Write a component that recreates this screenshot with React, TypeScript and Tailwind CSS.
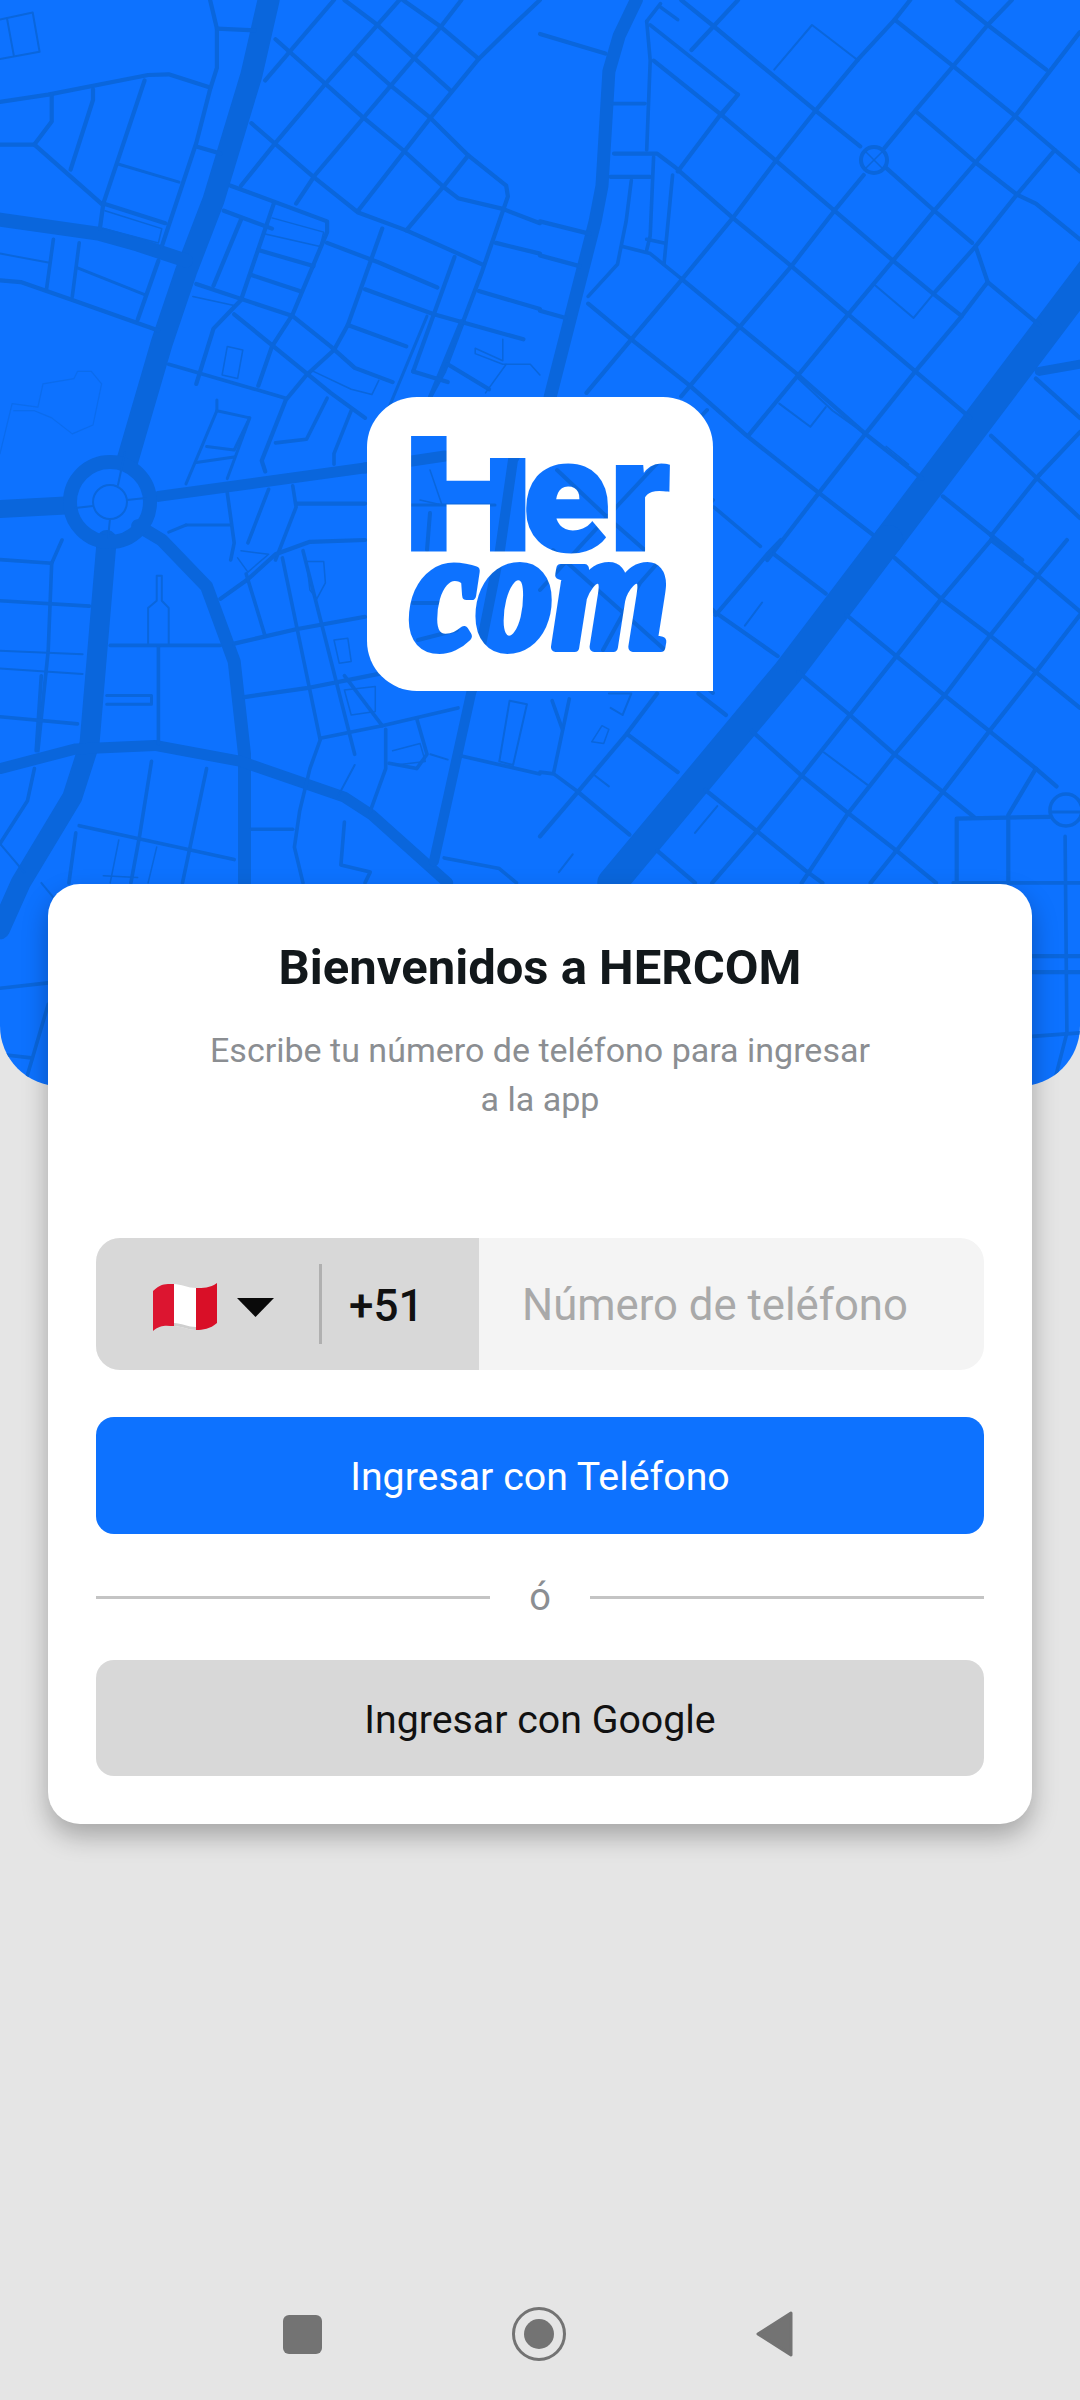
import * as React from "react";

type Road = { w: number; o?: number; p: number[] };

// street lines, traced per zone in the coordinates of a 2.904 x 2.8 enlargement
const zoneA: Road[] = [
  { w: 22, p: [780, 0, 730, 210, 620, 560, 540, 760, 470, 960, 370, 1290] },
  { w: 14, p: [0, 615, 290, 655, 400, 685, 540, 730] },
  { w: 11, p: [460, 1390, 1060, 1310] },
  { w: 18, p: [0, 1425, 190, 1415] },
  { w: 3.5, p: [0, 285, 140, 265, 430, 210, 490, 208, 610, 245] },
  { w: 3.5, p: [610, 0, 630, 80, 630, 190, 610, 250, 570, 400, 470, 690] },
  { w: 3.5, p: [630, 80, 740, 85] },
  { w: 3.5, p: [150, 265, 150, 340, 100, 405, 0, 405] },
  { w: 3.5, p: [100, 405, 300, 575] },
  { w: 3.5, p: [270, 250, 270, 280, 205, 475] },
  { w: 3.5, p: [420, 225, 300, 570, 290, 640] },
  { w: 3.5, p: [300, 570, 480, 625] },
  { w: 2.5, p: [345, 460, 520, 510] },
  { w: 3.5, p: [570, 410, 640, 430] },
  { w: 3.5, p: [800, 110, 1050, 325, 1170, 420, 1290, 525, 1330, 555, 1460, 585, 1568, 625] },
  { w: 3.5, p: [1000, 0, 1090, 65, 1200, 160, 1310, 255] },
  { w: 3.5, p: [1170, 0, 1280, 75, 1390, 165] },
  { w: 3.5, p: [1030, 150, 1135, 240, 1250, 330, 1360, 435, 1470, 520, 1475, 550, 1400, 760, 1290, 1040, 1250, 1110] },
  { w: 3.5, p: [730, 345, 910, 495, 1040, 595, 1180, 645, 1400, 740] },
  { w: 3.5, p: [770, 225, 970, 0] },
  { w: 3.5, p: [1160, 0, 945, 235, 800, 400, 700, 520] },
  { w: 3.5, p: [1340, 0, 1280, 75, 1135, 240, 915, 490, 860, 570] },
  { w: 3.5, p: [1568, 0, 1480, 80, 1390, 165, 1250, 330, 1040, 590] },
  { w: 3.5, p: [1360, 435, 1290, 520, 1180, 645] },
  { w: 3.5, p: [670, 520, 950, 620, 950, 650, 850, 880, 790, 970, 750, 1080] },
  { w: 3.5, p: [795, 570, 700, 840, 620, 920, 570, 1075] },
  { w: 3.5, p: [700, 615, 620, 800] },
  { w: 3.5, p: [650, 590, 790, 640] },
  { w: 3.5, p: [950, 680, 1100, 735, 1270, 805] },
  { w: 3.5, p: [1110, 640, 1040, 830, 1010, 910, 970, 980, 890, 1050, 830, 1120, 760, 1290, 770, 1320] },
  { w: 3.5, p: [750, 700, 910, 745] },
  { w: 3.5, p: [730, 770, 870, 815] },
  { w: 3.5, p: [570, 795, 850, 885, 960, 970, 1030, 1030, 1140, 1070] },
  { w: 3.5, p: [680, 880, 960, 1100, 1060, 1170] },
  { w: 3.5, p: [1060, 810, 1260, 880, 1520, 950] },
  { w: 3.5, p: [1010, 910, 1180, 970] },
  { w: 2.5, p: [1240, 885, 1130, 1140] },
  { w: 3.5, p: [1320, 720, 1200, 1040] },
  { w: 3.5, p: [1440, 680, 1568, 710] },
  { w: 3.5, p: [1390, 815, 1568, 865] },
  { w: 3.5, p: [1340, 900, 1250, 1110] },
  { w: 3.5, p: [0, 785, 60, 790, 210, 840, 460, 925] },
  { w: 3, p: [155, 670, 135, 810] },
  { w: 3, p: [230, 680, 210, 830] },
  { w: 2, p: [0, 710, 140, 735] },
  { w: 2.5, p: [225, 750, 420, 825] },
  { w: 3.5, p: [460, 730, 400, 895] },
  { w: 3, p: [490, 1020, 830, 1115] },
  { w: 2.5, p: [630, 1120, 630, 1150, 725, 1170, 680, 1260, 600, 1250] },
  { w: 2.5, p: [630, 1150, 540, 1355] },
  { w: 2.5, p: [725, 1170, 660, 1340] },
  { w: 2.5, p: [570, 1295, 680, 1280] },
  { w: 3.5, p: [1300, 1020, 1420, 1090] },
  { w: 3.5, p: [1200, 1040, 1300, 1070] },
  { w: 3.5, p: [860, 1410, 1060, 1410] },
  { w: 3, p: [660, 1380, 680, 1520, 670, 1568] },
  { w: 3, p: [850, 1360, 860, 1420, 800, 1568] },
  { w: 3, p: [780, 1370, 720, 1520] },
  { w: 3, p: [1020, 1150, 970, 1270, 970, 1300] },
  { w: 3, p: [950, 1115, 890, 1230, 800, 1240] },
  { w: 2.5, p: [540, 1470, 670, 1470] },
  { w: 2.5, p: [490, 1490, 540, 1470] },
  { w: 2, p: [0, 55, 95, 35, 115, 145, 0, 165] },
  { w: 2, p: [20, 50, 40, 155] },
  { w: 1.2, o: 0.5, p: [0, 1270, 35, 1130, 110, 1140, 125, 1075, 215, 1060, 225, 1040, 265, 1040, 295, 1075, 270, 1190, 210, 1215, 150, 1170, 100, 1150, 40, 1150] },
  { w: 1.5, p: [1460, 950, 1460, 1010, 1380, 975, 1380, 990, 1460, 1020, 1540, 1020, 1568, 1050] },
  { w: 1.5, p: [1470, 1020, 1410, 1100] },
  { w: 1.5, p: [560, 830, 680, 855] },
  { w: 1.5, p: [305, 590, 470, 640, 460, 680, 300, 640] },
  { w: 1.5, p: [790, 610, 940, 650, 930, 690, 770, 655] },
  { w: 1.5, p: [910, 1040, 1020, 1090, 1080, 1105, 1100, 1065] },
  { w: 1.5, p: [660, 970, 705, 980, 690, 1060, 645, 1050, 660, 970] },
];

const zoneB: Road[] = [
  { w: 13, p: [280, 0, 230, 100, 200, 200, 180, 520, 160, 620, 30, 1110] },
  { w: 30, p: [1603, 756, 1011, 1512] },
  { w: 9, p: [1450, 1040, 1568, 1020] },
  { w: 3.5, p: [0, 95, 190, 150] },
  { w: 3.5, p: [0, 620, 145, 655] },
  { w: 3.5, p: [0, 715, 115, 745] },
  { w: 3.5, p: [0, 870, 75, 890] },
  { w: 3, p: [310, 60, 320, 170, 310, 420] },
  { w: 3, p: [210, 290, 305, 290] },
  { w: 3.5, p: [215, 430, 340, 430, 395, 470] },
  { w: 3.5, p: [205, 495, 320, 495] },
  { w: 3, p: [330, 440, 320, 660, 310, 700] },
  { w: 3, p: [385, 490, 360, 740] },
  { w: 3, p: [265, 505, 250, 620, 225, 740, 140, 830] },
  { w: 3, p: [240, 690, 320, 710, 410, 780] },
  { w: 3, p: [320, 70, 575, 265, 530, 320] },
  { w: 3, p: [350, 20, 400, 55] },
  { w: 3, p: [310, 60, 350, 10] },
  { w: 3, p: [310, 670, 360, 680] },
  { w: 3.5, p: [330, 170, 525, 320, 685, 450, 855, 590, 1025, 730, 1145, 825, 1225, 885] },
  { w: 3.5, p: [410, 0, 500, 70, 800, 310, 930, 410] },
  { w: 3.5, p: [1005, 470, 1145, 590, 1255, 680] },
  { w: 3.5, p: [1030, 55, 1200, 185, 1380, 325, 1568, 480] },
  { w: 3.5, p: [1210, 0, 1300, 70, 1470, 195] },
  { w: 3.5, p: [400, 475, 560, 610, 730, 745, 895, 880, 1090, 1040, 1250, 1170] },
  { w: 3.5, p: [140, 850, 265, 950, 435, 1080, 600, 1220, 810, 1380, 970, 1500] },
  { w: 3.5, p: [410, 780, 580, 915, 750, 1050, 945, 1215, 1110, 1340] },
  { w: 3.5, p: [1095, 315, 1265, 455, 1385, 545, 1440, 570, 1568, 670] },
  { w: 3.5, p: [135, 1100, 265, 950, 410, 785, 560, 610, 685, 450, 800, 310, 925, 165, 1030, 55, 1075, 0] },
  { w: 3.5, p: [410, 1110, 580, 915, 730, 745, 855, 590, 940, 490] },
  { w: 3.5, p: [1000, 415, 1090, 310, 1200, 185, 1300, 70, 1370, 0] },
  { w: 3.5, p: [605, 1220, 750, 1050, 895, 880, 1025, 730, 1145, 590, 1265, 455, 1380, 325, 1568, 90] },
  { w: 3.5, p: [660, 1568, 810, 1380, 945, 1215, 1090, 1040, 1225, 885, 1300, 790] },
  { w: 3.5, p: [1145, 820, 1265, 690, 1385, 545, 1495, 420] },
  { w: 3.5, p: [440, 140, 575, 0] },
  { w: 3.5, p: [400, 480, 525, 320, 575, 265] },
  { w: 3.5, p: [1265, 690, 1300, 790, 1450, 910] },
  { w: 3.5, p: [1440, 1060, 1568, 1170] },
  { w: 3.5, p: [1310, 1220, 1568, 1450] },
  { w: 3.5, p: [1170, 1390, 1400, 1568] },
  { w: 3.5, p: [1450, 1330, 1568, 1210] },
  { w: 3.5, p: [1310, 1500, 1450, 1330] },
  { w: 2, p: [680, 195, 790, 70, 925, 170] },
  { w: 2, p: [975, 800, 1085, 890, 1145, 820] },
  { w: 2, p: [695, 1130, 785, 1195, 830, 1140] },
  { w: 2, p: [750, 1060, 850, 1150, 945, 1215] },
  { w: 1.5, p: [1005, 1250, 1070, 1300] },
  { w: 3, p: [505, 1420, 640, 1530] },
];

const zoneC: Road[] = [
  { w: 20, p: [310, 0, 260, 570, 210, 720, 60, 960, 0, 1090] },
  { w: 13, p: [400, -40, 470, 0, 600, 130, 680, 340, 710, 600, 710, 960] },
  { w: 11, p: [0, 640, 220, 585, 450, 575, 700, 620, 1000, 720, 1080, 770, 1300, 960] },
  { w: 10, p: [1370, 420, 1260, 900] },
  { w: 3, p: [0, 55, 150, 65, 180, 0] },
  { w: 3, p: [150, 65, 140, 310, 110, 590] },
  { w: 3, p: [0, 170, 260, 185] },
  { w: 2, p: [0, 310, 240, 320] },
  { w: 2, p: [0, 360, 240, 375] },
  { w: 3, p: [120, 380, 105, 590] },
  { w: 3, p: [0, 495, 225, 515] },
  { w: 3, p: [320, 295, 640, 295] },
  { w: 3, p: [460, 300, 460, 570] },
  { w: 2.5, p: [310, 435, 440, 435, 440, 460, 310, 460] },
  { w: 2, p: [430, 290, 430, 190, 455, 170, 455, 100, 470, 100, 470, 170, 490, 190, 490, 290] },
  { w: 3.5, p: [640, 165, 720, 110, 800, 40, 900, 5, 1060, 0] },
  { w: 3.5, p: [680, 290, 860, 250, 1060, 215] },
  { w: 3, p: [820, 50, 930, 560, 900, 640, 870, 760, 855, 860, 880, 960] },
  { w: 3.5, p: [710, 440, 890, 415, 1100, 375] },
  { w: 3, p: [715, 95, 770, 270] },
  { w: 3, p: [880, 30, 1030, 600] },
  { w: 3, p: [1000, 380, 1110, 520, 930, 555] },
  { w: 3, p: [1110, 520, 1330, 470] },
  { w: 3, p: [1120, 530, 1120, 640, 1075, 760] },
  { w: 3, p: [1210, 500, 1240, 600, 1210, 640, 1130, 625] },
  { w: 2, p: [1250, 600, 1300, 615] },
  { w: 3, p: [1340, 605, 1568, 655] },
  { w: 3, p: [440, 620, 405, 830, 380, 960] },
  { w: 3, p: [600, 640, 530, 960] },
  { w: 3, p: [100, 640, 80, 730, 0, 850] },
  { w: 3, p: [230, 800, 680, 895] },
  { w: 3, p: [220, 820, 200, 960] },
  { w: 3, p: [730, 810, 850, 810] },
  { w: 3, p: [1000, 790, 990, 910, 1075, 930, 1060, 960] },
  { w: 3, p: [1290, 890, 1450, 920, 1500, 960] },
  { w: 2, p: [1030, 630, 980, 720] },
  { w: 3, p: [0, 1255, 140, 1240] },
  { w: 3, p: [0, 1440, 90, 1450] },
  { w: 3, p: [70, 1530, 140, 1300] },
  { w: 2, p: [0, 850, 70, 930] },
  { w: 2, p: [120, 960, 180, 1030] },
  { w: 1.5, p: [300, 940, 400, 945] },
  { w: 1.5, p: [345, 840, 320, 960] },
  { w: 1.5, p: [455, 860, 430, 960] },
  { w: 2, p: [1480, 450, 1530, 460, 1490, 630, 1450, 620, 1480, 450] },
  { w: 1.5, p: [1000, 420, 1090, 410, 1090, 480, 1020, 490, 1000, 420] },
  { w: 1.5, p: [890, 60, 940, 60, 945, 120, 920, 165, 900, 140, 890, 60] },
  { w: 1.5, p: [970, 280, 1010, 275, 1020, 340, 985, 345, 970, 280] },
  { w: 1.5, p: [1140, 590, 1220, 570, 1235, 620, 1150, 630] },
  { w: 1.5, p: [700, 30, 780, 40, 720, 90, 690, 50] },
];

const zoneD: Road[] = [
  { w: 30, p: [1011, 0, 720, 370, 210, 960] },
  { w: 3.5, p: [1030, 50, 1165, 165, 1310, 270, 1440, 370, 1568, 470] },
  { w: 3.5, p: [1310, 0, 1445, 100, 1568, 200] },
  { w: 3.5, p: [890, 210, 1035, 325, 1175, 435, 1305, 535, 1440, 640, 1500, 690] },
  { w: 3.5, p: [750, 370, 900, 490, 1030, 600, 1170, 705, 1260, 775] },
  { w: 3.5, p: [615, 535, 760, 660, 895, 765, 1035, 870, 1150, 960] },
  { w: 3.5, p: [480, 700, 630, 815, 770, 925, 820, 960] },
  { w: 3.5, p: [340, 870, 450, 960] },
  { w: 3.5, p: [255, 545, 400, 650] },
  { w: 3.5, p: [110, 705, 260, 825] },
  { w: 3.5, p: [505, 200, 690, 325] },
  { w: 3.5, p: [680, 40, 830, 150] },
  { w: 3.5, p: [460, 430, 540, 490] },
  { w: 3.5, p: [500, 960, 630, 815, 760, 660, 900, 490, 1035, 325, 1165, 165, 1310, 0] },
  { w: 3.5, p: [760, 960, 895, 765, 1030, 600, 1175, 435, 1305, 270, 1445, 100, 1530, 0] },
  { w: 3.5, p: [960, 960, 1035, 870, 1170, 705, 1305, 535, 1440, 370, 1568, 210] },
  { w: 3.5, p: [1360, 770, 1440, 640] },
  { w: 3.5, p: [0, 830, 110, 705, 250, 545, 340, 430] },
  { w: 3.5, p: [510, 210, 660, 40, 700, 0] },
  { w: 3.5, p: [1210, 960, 1210, 780, 1480, 775] },
  { w: 3.5, p: [1360, 780, 1360, 960] },
  { w: 3, p: [1525, 830, 1530, 1380, 1490, 1530] },
  { w: 3.5, p: [1430, 1165, 1568, 1165] },
  { w: 3.5, p: [1430, 1210, 1568, 1210] },
  { w: 3, p: [1430, 1390, 1568, 1380] },
  { w: 3, p: [1200, 960, 1568, 960] },
  { w: 2, p: [595, 240, 645, 175] },
  { w: 2, p: [450, 820, 515, 745] },
  { w: 2, p: [55, 930, 95, 880] },
  { w: 2, p: [825, 595, 950, 685] },
  { w: 2, p: [160, 660, 200, 690] },
  { w: 3, p: [0, 650, 40, 655, 110, 705] },
  { w: 3, p: [40, 650, 85, 445] },
  { w: 3, p: [35, 450, 65, 530] },
  { w: 2, p: [200, 430, 265, 430, 240, 490, 205, 470] },
  { w: 1.5, p: [180, 520, 200, 530, 185, 570, 150, 565, 180, 520] },
];

const toPath = (p: number[], ox: number, oy: number) => {
  let d = "";
  for (let i = 0; i < p.length; i += 2) {
    const x = ox + p[i] / 2.904;
    const y = oy + p[i + 1] / 2.8;
    d += `${i === 0 ? "M" : "L"}${x.toFixed(1)} ${y.toFixed(1)} `;
  }
  return d;
};

const streetWidth = (w: number) => (w >= 2.5 && w < 5 ? w * 1.2 : w);

const Zone = ({ roads, ox, oy }: { roads: Road[]; ox: number; oy: number }) => (
  <>
    {roads.map((r, i) => (
      <path key={i} d={toPath(r.p, ox, oy)} strokeWidth={streetWidth(r.w)} opacity={r.o} />
    ))}
  </>
);

const MapLines = () => (
  <svg
    viewBox="0 0 1080 1086"
    className="absolute inset-0 w-full h-full"
    fill="none"
    stroke="#0a66dc"
    strokeLinejoin="round"
    strokeLinecap="round"
  >
    <Zone roads={zoneA} ox={0} oy={0} />
    <Zone roads={zoneB} ox={540} oy={0} />
    <Zone roads={zoneC} ox={0} oy={540} />
    <Zone roads={zoneD} ox={540} oy={540} />
    <circle cx="110" cy="502" r="40" strokeWidth="14" />
    <circle cx="110" cy="502" r="17" strokeWidth="2" />
    <path d="M125 452L118 485M110 519L108 538M127 500L146 498M93 506L75 508" strokeWidth="2" />
    <circle cx="874" cy="160" r="13" strokeWidth="4" />
    <path d="M866 152L882 168M882 152L866 168" strokeWidth="1.5" />
    <circle cx="1066" cy="810" r="16" strokeWidth="3.5" />
    <path d="M1050 812L1080 812" strokeWidth="3" />
    {/* what shows through the letters of the logo */}
    <path d="M365 468L445 456" strokeWidth="11" />
    <path d="M550 396L513 460L500 550L472 690" strokeWidth="10" />
    <path d="M557 470L607 517L713 610" strokeWidth="4" />
    <path d="M553 550L713 693" strokeWidth="4" />
    <path d="M707 410L620 503L540 590" strokeWidth="4" />
    <path d="M713 500L640 583L603 650" strokeWidth="4" />
    <path d="M411 505L495 505" strokeWidth="3" />
    <path d="M430 513L427 550" strokeWidth="4" />
    <path d="M430 470L442 505L420 500" strokeWidth="1.5" />
    <path d="M413 603L457 603M418 640L457 630" strokeWidth="4" />
  </svg>
);

const Logo = () => (
  <svg viewBox="0 0 346 294" className="relative w-[346px] h-[294px]">
    <mask id="cut">
      <path d="M50 0H296A50 50 0 0 1 346 50V294H50A50 50 0 0 1 0 244V50A50 50 0 0 1 50 0Z" fill="white" />
      <text
        x="35.7"
        y="152.5"
        fontFamily="Roboto, sans-serif"
        fontWeight="900"
        fontSize="158"
        textLength="131"
        lengthAdjust="spacingAndGlyphs"
        fill="black"
        stroke="black"
        strokeWidth="3"
      >
        H
      </text>
      <rect x="120" y="30" width="45" height="31" fill="white" />
      <text
        x="156"
        y="152.5"
        fontFamily="Roboto, sans-serif"
        fontWeight="900"
        fontSize="158"
        textLength="147"
        lengthAdjust="spacingAndGlyphs"
        fill="black"
        stroke="black"
        strokeWidth="3"
      >
        er
      </text>
      <text
        x="44"
        y="250"
        fontFamily="Liberation Serif, serif"
        fontWeight="700"
        fontStyle="italic"
        fontSize="170"
        textLength="258"
        lengthAdjust="spacingAndGlyphs"
        fill="black"
        stroke="black"
        strokeWidth="10"
        strokeLinejoin="round"
      >
        com
      </text>
    </mask>
    <rect width="346" height="294" fill="white" mask="url(#cut)" />
  </svg>
);

const Flag = () => (
  <svg viewBox="0 0 64 48" className="mt-[6px] w-16 h-12">
    <path d="M0 8C8 0 14 1 21 1V43C14 43 8 41 0 48Z" fill="#dc1530" />
    <path d="M21 1C28 1 35 5 43 5V47C35 47 28 43 21 43Z" fill="#ffffff" />
    <path d="M21 43C28 43 35 47 43 47V44C35 44 28 40 21 40Z" fill="#cfcfcf" />
    <path d="M43 5C50 5 57 5 64 0V40C57 46 50 47 43 47Z" fill="#d90f27" />
  </svg>
);

const App = () => {
  return (
    <div className="w-full h-[2400px] flex flex-col bg-[#e5e5e5] font-['Roboto',sans-serif]">
      <div className="relative h-[1086px] shrink-0 overflow-hidden rounded-b-[60px] bg-[#0d72ff] flex justify-center pt-[397px]">
        <MapLines />
        <Logo />
      </div>

      <div className="relative mx-12 -mt-[202px] h-[940px] rounded-[32px] bg-white px-12 pt-[60px] shadow-[0_12px_26px_rgba(0,0,0,0.28)]">
        <h1 className="text-center text-[49px] leading-[48px] font-bold text-[#12181b]">Bienvenidos a HERCOM</h1>
        <p className="mt-[34px] px-[105px] text-center text-[34px] leading-[49px] text-[#8b8e92]">
          Escribe tu número de teléfono para ingresar a la app
        </p>

        <div className="mt-[114px] flex h-[132px] overflow-hidden rounded-[24px] bg-[#f4f4f4]">
          <div className="flex w-[383px] items-center bg-[#d8d8d8] pl-[57px]">
            <Flag />
            <svg viewBox="0 0 37 19" className="ml-5 mt-[6px] w-[37px] h-[19px]">
              <path d="M0 0H37L18.5 19Z" fill="#0a0a0a" />
            </svg>
            <div className="ml-[45px] h-20 w-[3px] bg-[#b0b0b0]" />
            <span className="ml-[27px] pt-[3px] text-[44px] font-medium text-[#111111]">+51</span>
          </div>
          <input
            className="min-w-0 flex-1 bg-transparent pl-[43px] pt-[4px] text-[43.7px] placeholder:text-[#a9a9a9] outline-none"
            placeholder="Número de teléfono"
          />
        </div>

        <button className="mt-[47px] block h-[117px] w-full rounded-[18px] bg-[#0d72ff] pt-[4px] text-[39.3px] text-white">
          Ingresar con Teléfono
        </button>

        <div className="flex h-[126px] items-center gap-[39px]">
          <div className="h-[3px] flex-1 bg-[#c4c4c4]" />
          <span className="text-[38px] text-[#8b8e92]">ó</span>
          <div className="h-[3px] flex-1 bg-[#c4c4c4]" />
        </div>

        <button className="block h-[116px] w-full rounded-[18px] bg-[#d8d8d8] pt-[4px] text-[39.3px] text-[#111111]">
          Ingresar con Google
        </button>
      </div>

      <div className="mt-auto mb-[36px] flex h-[60px] items-center justify-center gap-[190px] pr-[3px]">
        <div className="h-[39px] w-[39px] rounded-[6px] bg-[#737373]" />
        <svg viewBox="0 0 54 54" className="w-[54px] h-[54px]">
          <circle cx="27" cy="27" r="25.5" fill="none" stroke="#737373" strokeWidth="3" />
          <circle cx="27" cy="27" r="15" fill="#737373" />
        </svg>
        <svg viewBox="0 0 38 46" className="w-[38px] h-[46px]">
          <path d="M35 2L2 23L35 44Z" fill="#737373" stroke="#737373" strokeWidth="3" strokeLinejoin="round" />
        </svg>
      </div>
    </div>
  );
};

export default App;
